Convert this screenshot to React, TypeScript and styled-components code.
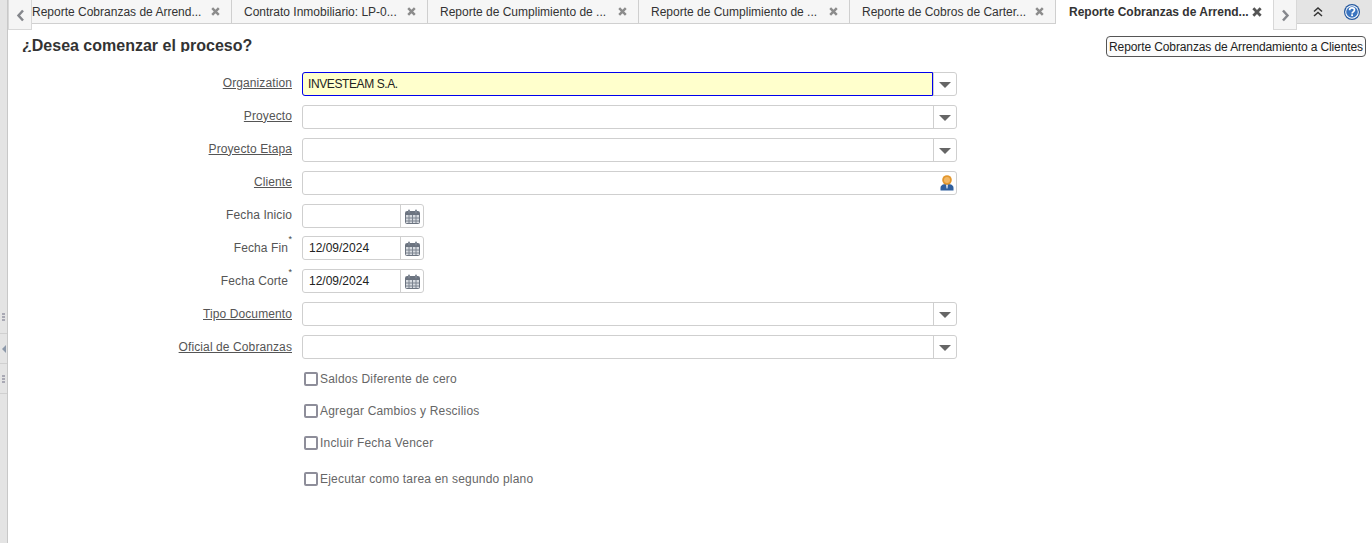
import React from 'react';
import styled, { createGlobalStyle } from 'styled-components';

const GlobalStyle = createGlobalStyle`
  html, body {
    margin: 0;
    padding: 0;
    background: #fff;
    font-family: 'Liberation Sans', Arial, sans-serif;
    font-size: 12px;
    color: #333;
    overflow: hidden;
  }
`;

const Page = styled.div`
  display: flex;
  width: 1372px;
  height: 543px;
`;

const SideBar = styled.div`
  width: 7px;
  flex: none;
  background: #e4e4e4;
  border-right: 1px solid #c8c8c8;
  display: flex;
  flex-direction: column;
  padding-top: 300px;
  height: 243px;
`;

const SideCell = styled.div`
  height: 29px;
  border-bottom: 1px solid #d0d0d0;
  display: flex;
  align-items: center;
  justify-content: center;
  &:first-child { height: 33px; }
`;

const Grip = styled.div`
  width: 3px;
  height: 8px;
  background: repeating-linear-gradient(#a9a9b4 0 2px, transparent 2px 3px);
`;

const SideArrow = styled.div`
  width: 0;
  height: 0;
  border-top: 4px solid transparent;
  border-bottom: 4px solid transparent;
  border-right: 4px solid #8d99aa;
`;

const Main = styled.div`
  flex: 1;
  min-width: 0;
  display: flex;
  flex-direction: column;
`;

const TabBar = styled.div`
  position: relative;
  height: 24px;
  flex: none;
  display: flex;
  background: #e4e4e4;
  border-bottom: 1px solid #d0d0d0;
  box-sizing: border-box;
  padding-left: 12px;
`;

const Tab = styled.div<{ $w: number; $active?: boolean }>`
  width: ${p => p.$w}px;
  flex: none;
  box-sizing: border-box;
  height: ${p => (p.$active ? 24 : 23)}px;
  display: flex;
  align-items: center;
  justify-content: space-between;
  padding: 0 ${p => (p.$active ? 10 : 11)}px 0 ${p => (p.$active ? 13 : 12)}px;
  background: ${p => (p.$active ? '#fff' : '#f6f6f6')};
  border-right: 1px solid ${p => (p.$active ? '#fff' : '#cfcfcf')};
  color: #333;
  font-weight: ${p => (p.$active ? 700 : 400)};
  white-space: nowrap;
  overflow: hidden;
  line-height: 26px;
  svg { color: ${p => (p.$active ? '#555' : '#8c8c8c')}; flex: none; }
`;

const Scroller = styled.div<{ $side: 'left' | 'right' }>`
  position: absolute;
  top: 0;
  left: ${p => (p.$side === 'left' ? 0 : 1265)}px;
  width: 24px;
  height: 30px;
  box-sizing: border-box;
  background: #f5f5f5;
  border: 1px solid #d8d8d8;
  border-top: none;
  display: flex;
  align-items: center;
  justify-content: center;
  padding-top: 1px;
  color: #85878c;
  z-index: 2;
`;

const Tools = styled.div`
  position: absolute;
  top: 0;
  right: 0;
  height: 23px;
  width: 75px;
  display: flex;
  align-items: center;
  color: #333;
`;

const ToolSlot = styled.div<{ $w: number }>`
  width: ${p => p.$w}px;
  display: flex;
  justify-content: center;
`;

const Content = styled.div`
  flex: 1;
  display: flex;
  flex-direction: column;
`;

const HeadRow = styled.div`
  display: flex;
  justify-content: space-between;
  align-items: flex-start;
  height: 48px;
  flex: none;
  padding: 12px 6px 0 14px;
  box-sizing: border-box;
`;

const Heading = styled.h1`
  margin: 0;
  height: 16px;
  overflow: hidden;
  font-size: 16px;
  font-weight: 700;
  line-height: 20px;
  color: #333;
`;

const InfoButton = styled.div`
  width: 260px;
  height: 21px;
  box-sizing: border-box;
  border: 1px solid #555;
  border-radius: 4px;
  background: #fcfcfc;
  color: #222;
  text-align: center;
  line-height: 20px;
  letter-spacing: -0.11px;
  white-space: nowrap;
`;

const Form = styled.div`
  display: flex;
  flex-direction: column;
  gap: 9px;
`;

const Row = styled.div<{ $tight?: boolean }>`
  display: flex;
  align-items: center;
  gap: 10px;
  height: 24px;
  margin-top: ${p => (p.$tight ? -1 : 0)}px;
`;

const Label = styled.div<{ $link?: boolean; $req?: boolean; $low?: boolean }>`
  width: 284px;
  flex: none;
  text-align: right;
  color: #555;
  text-decoration: ${p => (p.$link ? 'underline' : 'none')};
  letter-spacing: 0.1px;
  position: relative;
  padding-right: ${p => (p.$req ? 4 : 0)}px;
  box-sizing: border-box;
  margin-top: ${p => (p.$low ? -1 : -3)}px;
`;

const ReqMark = styled.span`
  position: absolute;
  right: 0;
  top: -7px;
  font-size: 9px;
  color: #444;
`;

const Field = styled.div<{ $w: number }>`
  width: ${p => p.$w}px;
  height: 24px;
  box-sizing: border-box;
  display: flex;
  border: 1px solid #cfcfcf;
  border-radius: 3px;
  background: #fff;
`;

const Value = styled.div<{ $focus?: boolean }>`
  flex: 1;
  min-width: 0;
  margin: ${p => (p.$focus ? '-1px 0 -1px -1px' : 0)};
  padding-left: ${p => (p.$focus ? 5 : 6)}px;
  line-height: 22px;
  color: #222;
  letter-spacing: ${p => (p.$focus ? -0.4 : 0)}px;
  background: ${p => (p.$focus ? '#ffffcc' : 'transparent')};
  border: ${p => (p.$focus ? '1px solid #0000ee' : 'none')};
  border-radius: ${p => (p.$focus ? '3px 0 0 3px' : 0)};
`;

const FieldBtn = styled.div<{ $plain?: boolean }>`
  width: 22px;
  flex: none;
  display: flex;
  align-items: center;
  justify-content: center;
  border-left: ${p => (p.$plain ? 'none' : '1px solid #cfcfcf')};
`;

const Caret = styled.div`
  width: 0;
  height: 0;
  margin-top: 2px;
  border-left: 6px solid transparent;
  border-right: 6px solid transparent;
  border-top: 6px solid #666;
`;

const Checks = styled.div`
  display: flex;
  flex-direction: column;
  padding-left: 296px;
  margin-top: 4px;
`;

const CheckRow = styled.div<{ $h: number }>`
  height: ${p => p.$h}px;
  display: flex;
  align-items: center;
  gap: 2px;
  color: #666;
  letter-spacing: 0.2px;
`;

const Box = styled.div`
  width: 14px;
  height: 14px;
  box-sizing: border-box;
  border: 2px solid #8e8e9a;
  border-radius: 2px;
  background: #fff;
`;

const CloseIcon: React.FC<{ size?: number }> = ({ size = 9 }) => (
  <svg width={size} height={size} viewBox="0 0 9 9">
    <path d="M1.200 1.200l6.600 6.600M7.800 1.200l-6.600 6.600" stroke="currentColor" strokeWidth="2.500" fill="none" />
  </svg>
);

const Chevron: React.FC<{ dir: 'left' | 'right' }> = ({ dir }) => (
  <svg width="9" height="13" viewBox="0 0 9 13">
    <path
      d={dir === 'left' ? 'M7 1.500L2.500 6.500L7 11.500' : 'M2 1.500L6.500 6.500L2 11.500'}
      stroke="currentColor"
      strokeWidth="2.500"
      fill="none"
    />
  </svg>
);

const DoubleUp = () => (
  <svg width="10" height="10" viewBox="0 0 10 10">
    <path d="M1 4.500L5 1L9 4.500M1 9L5 5.500L9 9" stroke="#333" strokeWidth="1.500" fill="none" />
  </svg>
);

const HelpIcon = () => (
  <svg width="16" height="16" viewBox="0 0 16 16">
    <circle cx="8" cy="8" r="8" fill="#24589f" />
    <circle cx="8" cy="8" r="6.800" fill="#fff" />
    <circle cx="8" cy="8" r="5.800" fill="#3a74c0" />
    <path d="M5.600 6.200C5.600 4.700 6.700 3.900 8 3.900s2.500.8 2.500 2.200c0 1.800-2.400 1.700-2.400 3.300" stroke="#fff" strokeWidth="1.700" fill="none" />
    <rect x="7.200" y="10.300" width="1.800" height="1.800" fill="#fff" />
  </svg>
);

const CalendarIcon = () => (
  <svg width="15" height="15" viewBox="0 0 15 15">
    <rect x="0.5" y="2.500" width="14" height="12" rx="1" fill="#d7dbe0" stroke="#6c7480" />
    <rect x="1" y="3" width="13" height="3" fill="#6c7480" />
    <rect x="3" y="0.500" width="2" height="4" rx="1" fill="#7c8490" />
    <rect x="10" y="0.500" width="2" height="4" rx="1" fill="#7c8490" />
    <path d="M1 9h13M1 12h13M4 6v8M7.500 6v8M11 6v8" stroke="#7c8490" strokeWidth="1" />
  </svg>
);

const UserSlot = styled.div`
  margin-left: 3px;
  display: flex;
`;

const UserIcon = () => (
  <UserSlot>
    <svg width="14" height="16" viewBox="0 0 14 16">
      <path d="M0.500 15.500V13c0-2.500 2-4 6.500-4s6.500 1.500 6.500 4v2.500z" fill="#2f5f9e" />
      <path d="M6 9.500h2l-.5 4h-1z" fill="#dfe8f2" />
      <circle cx="7" cy="5" r="4.800" fill="#e2962c" />
      <circle cx="7" cy="5" r="3" fill="#f2b764" />
    </svg>
  </UserSlot>
);

const tabs = [
  { w: 212, title: 'Reporte Cobranzas de Arrend...' },
  { w: 196, title: 'Contrato Inmobiliario: LP-0...' },
  { w: 211, title: 'Reporte de Cumplimiento de ...' },
  { w: 211, title: 'Reporte de Cumplimiento de ...' },
  { w: 206, title: 'Reporte de Cobros de Carter...' },
];

const topCombos = [
  { label: 'Organization', value: 'INVESTEAM S.A.', focus: true },
  { label: 'Proyecto' },
  { label: 'Proyecto Etapa' },
];

const App: React.FC = () => {
  return (
    <Page>
      <GlobalStyle />
      <SideBar>
        <SideCell><Grip /></SideCell>
        <SideCell><SideArrow /></SideCell>
        <SideCell><Grip /></SideCell>
      </SideBar>
      <Main>
        <TabBar>
          <Scroller $side="left"><Chevron dir="left" /></Scroller>
          {tabs.map((t, idx) => (
            <Tab key={idx} $w={t.w}>
              {t.title}
              <CloseIcon />
            </Tab>
          ))}
          <Tab $w={217} $active>
            Reporte Cobranzas de Arrend...
            <CloseIcon size={10} />
          </Tab>
          <Scroller $side="right"><Chevron dir="right" /></Scroller>
          <Tools>
            <ToolSlot $w={42}><DoubleUp /></ToolSlot>
            <ToolSlot $w={26}><HelpIcon /></ToolSlot>
          </Tools>
        </TabBar>
        <Content>
          <HeadRow>
            <Heading>¿Desea comenzar el proceso?</Heading>
            <InfoButton>Reporte Cobranzas de Arrendamiento a Clientes</InfoButton>
          </HeadRow>
          <Form>
            {topCombos.map(c => (
              <Row key={c.label}>
                <Label $link>{c.label}</Label>
                <Field $w={655}>
                  <Value $focus={c.focus}>{c.value}</Value>
                  <FieldBtn><Caret /></FieldBtn>
                </Field>
              </Row>
            ))}
            <Row>
              <Label $link>Cliente</Label>
              <Field $w={655}>
                <Value />
                <FieldBtn $plain><UserIcon /></FieldBtn>
              </Field>
            </Row>
            <Row>
              <Label>Fecha Inicio</Label>
              <Field $w={122}>
                <Value />
                <FieldBtn><CalendarIcon /></FieldBtn>
              </Field>
            </Row>
            <Row $tight>
              <Label $req $low>Fecha Fin<ReqMark>*</ReqMark></Label>
              <Field $w={122}>
                <Value>12/09/2024</Value>
                <FieldBtn><CalendarIcon /></FieldBtn>
              </Field>
            </Row>
            <Row>
              <Label $req $low>Fecha Corte<ReqMark>*</ReqMark></Label>
              <Field $w={122}>
                <Value>12/09/2024</Value>
                <FieldBtn><CalendarIcon /></FieldBtn>
              </Field>
            </Row>
            <Row>
              <Label $link $low>Tipo Documento</Label>
              <Field $w={655}>
                <Value />
                <FieldBtn><Caret /></FieldBtn>
              </Field>
            </Row>
            <Row>
              <Label $link $low>Oficial de Cobranzas</Label>
              <Field $w={655}>
                <Value />
                <FieldBtn><Caret /></FieldBtn>
              </Field>
            </Row>
          </Form>
          <Checks>
            <CheckRow $h={32}><Box />Saldos Diferente de cero</CheckRow>
            <CheckRow $h={32}><Box />Agregar Cambios y Rescilios</CheckRow>
            <CheckRow $h={32}><Box />Incluir Fecha Vencer</CheckRow>
            <CheckRow $h={40}><Box />Ejecutar como tarea en segundo plano</CheckRow>
          </Checks>
        </Content>
      </Main>
    </Page>
  );
};

export default App;
